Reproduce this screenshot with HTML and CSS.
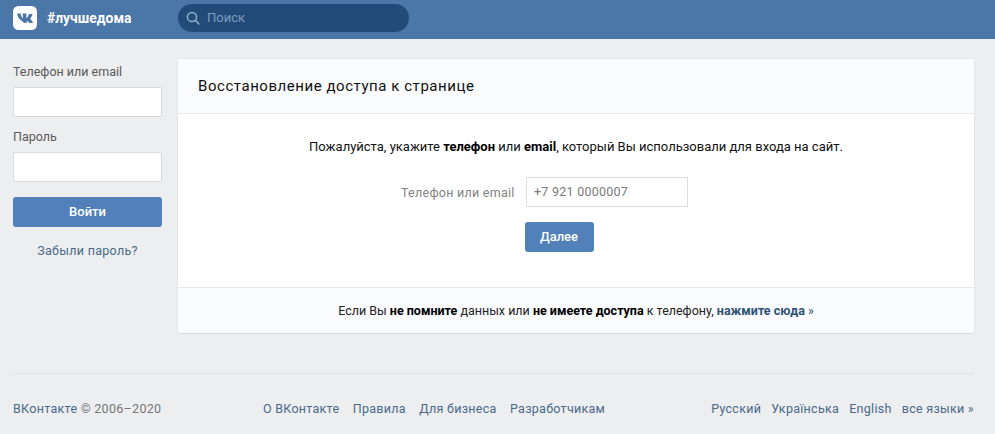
FILE: index.html
```html
<!DOCTYPE html>
<html lang="ru">
<head>
<meta charset="utf-8">
<title>Восстановление доступа</title>
<link rel="stylesheet" href="styles.css">
</head>
<body>
<header class="topbar">
  <svg class="logo" width="24" height="24" viewBox="0 0 24 24">
    <rect width="24" height="24" rx="5.5" fill="#fff"/>
    <path d="M4.4 7.6h2.7c.3 0 .45.13.53.38.7 2.2 1.7 4.2 2.1 4.2.16 0 .22-.08.22-.48V9.6c-.05-.95-.55-1.2-.55-1.54 0-.2.16-.46.42-.46h3.1c.3 0 .4.16.4.5v3.5c0 .3.13.4.22.4.16 0 .3-.1.6-.4.95-1.06 1.62-3.1 1.62-3.1.09-.2.25-.4.55-.4h2.7c.46 0 .55.23.46.55-.2.9-2.1 3.8-2.1 3.8-.16.26-.22.38 0 .67.16.22.7.68 1.06 1.1.66.74 1.36 1.6 1.5 2.1.12.43-.1.68-.53.68h-2.7c-.47 0-.7-.37-1.5-1.2-.73-.7-1.04-.8-1.22-.8-.25 0-.32.07-.32.42v1.1c0 .3-.1.48-.9.48-1.32 0-3-.8-4.04-2.28C6.4 13.9 4.8 10.6 4.1 8.1c-.1-.33.02-.5.3-.5z" fill="#4a76a8"/>
  </svg>
  <span class="tag">#лучшедома</span>
  <div class="search">
    <svg class="search-icon" width="14" height="14" viewBox="0 0 14 14" fill="none" stroke="#93adc8" stroke-width="1.5">
      <circle cx="6" cy="6" r="4.6"/>
      <path d="M9.4 9.4l3.6 3.6" stroke-linecap="round"/>
    </svg>
    <span class="search-text">Поиск</span>
  </div>
</header>

<div class="page">
  <div class="columns">
    <aside class="side">
      <label class="side-label">Телефон или email</label>
      <div class="side-input"></div>
      <label class="side-label side-label-next">Пароль</label>
      <div class="side-input"></div>
      <button class="btn btn-login">Войти</button>
      <a class="forgot">Забыли пароль?</a>
    </aside>

    <main class="card">
      <div class="card-head">Восстановление доступа к странице</div>
      <div class="card-body">
        <p class="intro">Пожалуйста, укажите <b>телефон</b> или <b>email</b>, который Вы использовали для входа на сайт.</p>
        <div class="field">
          <span class="field-label">Телефон или email</span>
          <div class="field-input">+7 921 0000007</div>
        </div>
        <button class="btn btn-next">Далее</button>
      </div>
      <div class="card-foot">Если Вы <b>не помните</b> данных или <b>не имеете доступа</b> к телефону, <a class="foot-link"><b>нажмите сюда</b> »</a></div>
    </main>
  </div>

  <footer class="footer">
    <span class="copy"><a>ВКонтакте</a> © 2006–2020</span>
    <nav class="foot-nav"><a>О ВКонтакте</a><a>Правила</a><a>Для бизнеса</a><a>Разработчикам</a></nav>
    <nav class="foot-lang"><a>Русский</a><a>Українська</a><a>English</a><a>все языки »</a></nav>
  </footer>
</div>
</body>
</html>
```
FILE: styles.css
```css
* { box-sizing: border-box; }
html, body { margin: 0; padding: 0; }
body {
  width: 995px;
  height: 434px;
  overflow: hidden;
  background: #edeef0;
  font-family: Roboto, "Liberation Sans", sans-serif;
  font-size: 12.5px;
  color: #000;
}
a { color: #2a5885; }
b { font-weight: 700; color: #000; }

.topbar {
  height: 39px;
  background: #4a76a8;
  display: flex;
  align-items: center;
  padding-left: 13px;
}
.logo { flex: none; margin-top: -3px; }
.tag {
  margin-left: 10px;
  width: 131px;
  color: #fff;
  font-weight: 700;
  font-size: 13.9px;
  margin-top: -3px;
}
.search {
  width: 231px;
  height: 28px;
  margin-top: -3px;
  border-radius: 14px;
  background: #224b7a;
  display: flex;
  align-items: center;
  padding-left: 8px;
}
.search-text { margin-left: 7px; margin-top: -2px; color: #7d9bbb; font-size: 13px; }

.page { padding: 20px 21px 0 13px; }
.columns { display: flex; gap: 16px; align-items: flex-start; }

.side { width: 149px; flex: none; display: flex; flex-direction: column; }
.side-label { color: #5a5a5a; font-size: 12.5px; line-height: 15px; margin-top: 5px; }
.side-label-next { margin-top: 12px; }
.side-input {
  height: 30px;
  margin-top: 8px;
  background: #fff;
  border: 1px solid #d7dadd;
  border-radius: 2px;
}
.btn {
  border: 0;
  border-radius: 3px;
  background: #5181b8;
  color: #fff;
  font: 500 13px Roboto, "Liberation Sans", sans-serif;
  padding: 0 0 2px;
}
.btn-login { height: 30px; margin-top: 15px; }
.forgot { margin-top: 16px; text-align: center; font-size: 12.5px; line-height: 16px; color: #4a6a8a; letter-spacing: .3px; }

.card {
  width: 796px;
  flex: none;
  background: #fff;
  border-radius: 2px;
  box-shadow: 0 1px 0 0 #d7d8db, 0 0 0 1px #e3e4e8;
}
.card-head {
  height: 55px;
  background: #fafbfc;
  border-bottom: 1px solid #e7e8ec;
  padding-left: 20px;
  display: flex;
  align-items: center;
  font-size: 15px;
  letter-spacing: .55px;
  color: #111;
}
.card-body {
  height: 173px;
  display: flex;
  flex-direction: column;
  align-items: center;
  padding-top: 25px;
}
.intro { margin: 0; line-height: 16px; color: #111; font-size: 13px; }
.field { display: flex; align-items: center; margin-top: 22px; margin-right: 63px; }
.field-label { color: #828282; width: 125px; text-align: left; letter-spacing: .27px; }
.field-input {
  width: 162px;
  height: 30px;
  border: 1px solid #dcdee0;
  padding-left: 7px;
  line-height: 28px;
  color: #7a7a7a;
  letter-spacing: .25px;
}
.btn-next { width: 69px; height: 30px; margin-top: 15px; margin-right: 34px; }

.card-foot {
  height: 46px;
  background: #fafbfc;
  border-top: 1px solid #e7e8ec;
  display: flex;
  align-items: center;
  justify-content: center;
  white-space: pre-wrap;
  color: #222;
}
.foot-link, .foot-link b { color: #2f5273; }

.footer {
  margin-top: 40px;
  border-top: 1px solid #e1e3e6;
  height: 60px;
  display: flex;
  align-items: flex-start;
  padding-top: 27px;
  color: #6a6a6a;
  line-height: 16px;
}
.copy { width: 250px; letter-spacing: .3px; color: #777; }
.copy a { color: #4a6a8a; }
.foot-nav { display: flex; gap: 13.5px; }
.foot-nav a, .foot-lang a { color: #4a6a8a; letter-spacing: .27px; }
.foot-lang { display: flex; gap: 10.2px; margin-left: auto; }
```
